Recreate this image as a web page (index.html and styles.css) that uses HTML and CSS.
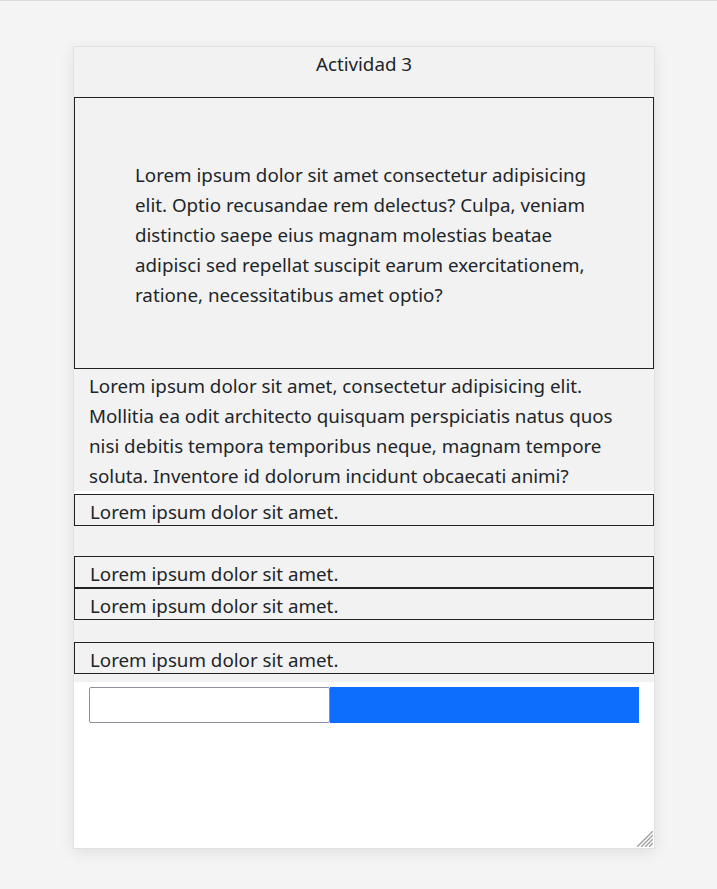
FILE: index.html
```html
<!DOCTYPE html>
<html lang="es">
<head>
<meta charset="utf-8">
<title>Actividad 3</title>
<link rel="stylesheet" href="styles.css">
</head>
<body>
<main class="card">
  <h1 class="title">Actividad 3</h1>
  <div class="box">
    <p class="box-text">Lorem ipsum dolor sit amet consectetur adipisicing elit. Optio recusandae rem delectus? Culpa, veniam distinctio saepe eius magnam molestias beatae adipisci sed repellat suscipit earum exercitationem, ratione, necessitatibus amet optio?</p>
  </div>
  <p class="intro">Lorem ipsum dolor sit amet, consectetur adipisicing elit. Mollitia ea odit architecto quisquam perspiciatis natus quos nisi debitis tempora temporibus neque, magnam tempore soluta. Inventore id dolorum incidunt obcaecati animi?</p>
  <ul class="items">
    <li class="item item-gap-lg">Lorem ipsum dolor sit amet.</li>
    <li class="item">Lorem ipsum dolor sit amet.</li>
    <li class="item item-gap-md">Lorem ipsum dolor sit amet.</li>
    <li class="item item-gap-sm">Lorem ipsum dolor sit amet.</li>
  </ul>
  <div class="answer">
    <div class="answer-row">
      <input class="answer-input" type="text" aria-label="Respuesta">
      <div class="answer-bar"></div>
    </div>
    <svg class="resizer" width="16" height="16" viewBox="0 0 16 16" aria-hidden="true">
      <path d="M16 0 L0 16 M16 4 L4 16 M16 8 L8 16 M16 12 L12 16" stroke="#a0a0a0" stroke-width="1.4" fill="none"/>
    </svg>
  </div>
</main>
</body>
</html>
```

FILE: styles.css
```css
* { box-sizing: border-box; }

html, body {
  margin: 0;
  padding: 0;
}

body {
  background: #f4f4f4;
  border-top: 1px solid #dcdcdc;
  font-family: "Noto Sans", "Open Sans", sans-serif;
  font-size: 18.75px;
  line-height: 30px;
  color: #212529;
  min-height: 889px;
}

.card {
  width: 582px;
  margin: 45px 0 0 73px;
  background: #f2f2f2;
  border: 1px solid #e1e1e1;
  box-shadow: 0 4px 14px rgba(0, 0, 0, 0.08);
}

.title {
  margin: 0;
  height: 50px;
  padding-top: 2px;
  font-size: 18.75px;
  font-weight: 400;
  line-height: 30px;
  text-align: center;
}

.box {
  border: 1px solid #222;
  padding: 62px 60px 58px;
}

.box-text {
  margin: 0;
}

.intro {
  margin: 0;
  padding: 2px 15px 0;
  border-bottom: 3px solid #fff;
}

.items {
  list-style: none;
  margin: 0;
  padding: 0;
}

.item {
  border: 1px solid #222;
  padding: 4px 16px 0 15px;
  line-height: 26px;
}

.item-gap-lg { margin-bottom: 30px; }
.item-gap-md { margin-bottom: 22px; }
.item-gap-sm { margin-bottom: 8px; }

.answer {
  position: relative;
  background: #fff;
  height: 166px;
  padding: 5px 15px;
}

.answer-row {
  display: flex;
  height: 36px;
}

.answer-input {
  flex: none;
  width: 241px;
  min-width: 0;
  height: 36px;
  margin: 0;
  border: 1px solid #8f8f9d;
  border-radius: 2px;
  background: #fff;
  font: inherit;
}

.answer-bar {
  flex: 1;
  background: #0d6efd;
}

.resizer {
  position: absolute;
  right: 1px;
  bottom: 1px;
  display: block;
}
```
